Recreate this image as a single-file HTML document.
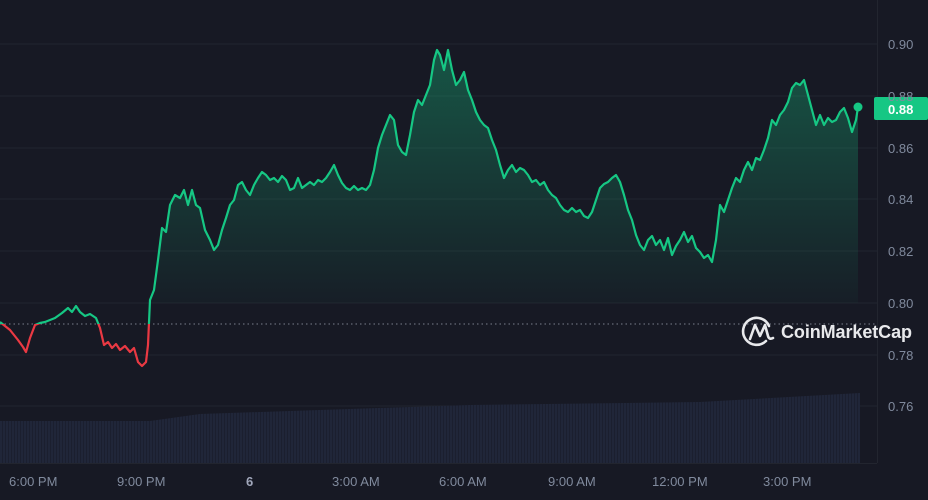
<!DOCTYPE html>
<html><head><style>
html,body{margin:0;padding:0;background:#171924;}
body{width:928px;height:495px;overflow:hidden;font-family:"Liberation Sans",sans-serif;}
</style></head><body>
<svg width="928" height="495" viewBox="0 0 928 495" xmlns="http://www.w3.org/2000/svg">
<defs>
<linearGradient id="g" x1="0" y1="0" x2="0" y2="1">
<stop offset="0" stop-color="#16c784" stop-opacity="0.35"/>
<stop offset="1" stop-color="#16c784" stop-opacity="0.03"/>
</linearGradient>
<clipPath id="up"><rect x="0" y="0" width="877" height="324"/></clipPath>
<clipPath id="fl"><rect x="0" y="0" width="877" height="303"/></clipPath>
<clipPath id="dn"><rect x="0" y="324" width="877" height="200"/></clipPath>
<pattern id="vb" width="3" height="10" patternUnits="userSpaceOnUse"><rect width="2" height="10" fill="#202639"/><rect x="2" width="1" height="10" fill="#1b1f2f"/></pattern>
</defs>
<rect width="928" height="495" fill="#171924"/>
<g stroke="#22252f" stroke-width="1">
<line x1="0" y1="44" x2="877" y2="44"/><line x1="0" y1="96" x2="877" y2="96"/><line x1="0" y1="148" x2="877" y2="148"/><line x1="0" y1="199" x2="877" y2="199"/><line x1="0" y1="251" x2="877" y2="251"/><line x1="0" y1="303" x2="877" y2="303"/><line x1="0" y1="355" x2="877" y2="355"/><line x1="0" y1="406" x2="877" y2="406"/>
<line x1="877.5" y1="0" x2="877.5" y2="463"/>
<line x1="0" y1="463.5" x2="877" y2="463.5"/>
</g>
<path d="M0 421 L150 421 L200 414 L470 405 L700 402 L860 393 L860 463 L0 463 Z" fill="url(#vb)"/>
<line x1="0" y1="324" x2="877" y2="324" stroke="#7a7f8c" stroke-width="1" stroke-dasharray="1.5 3"/>
<path clip-path="url(#fl)" fill="url(#g)" d="M150 303 L150 300 L154 290 L158 260 L162 228 L166 232 L170 205 L175 195 L180 198 L184 190 L188 205 L192 190 L196 205 L200 208 L205 230 L210 240 L214 250 L218 245 L222 230 L226 218 L230 205 L234 200 L238 185 L242 182 L246 190 L250 195 L254 185 L258 178 L262 172 L266 175 L270 180 L274 178 L278 182 L282 176 L286 180 L290 190 L294 188 L298 178 L302 188 L306 185 L310 182 L314 185 L318 180 L322 182 L326 178 L330 172 L334 165 L338 175 L342 183 L346 188 L350 190 L354 186 L358 190 L362 188 L366 190 L370 185 L374 170 L378 148 L382 135 L386 125 L390 115 L394 120 L398 145 L402 152 L406 155 L410 135 L414 112 L418 100 L422 105 L426 95 L430 85 L434 60 L437 50 L440 55 L444 70 L448 50 L452 70 L456 85 L460 80 L464 72 L468 90 L472 100 L476 112 L480 120 L484 125 L488 128 L492 140 L496 150 L500 165 L504 178 L508 170 L512 165 L516 172 L520 168 L524 170 L528 175 L532 182 L536 180 L540 185 L544 182 L548 190 L552 195 L556 198 L560 205 L564 210 L568 212 L572 208 L576 212 L580 210 L584 216 L588 218 L592 212 L596 200 L600 188 L604 184 L608 182 L612 178 L616 175 L620 182 L624 195 L628 210 L632 220 L636 235 L640 245 L644 250 L648 240 L652 236 L656 245 L660 240 L664 250 L668 238 L672 255 L676 246 L680 240 L684 232 L688 242 L692 236 L696 248 L700 252 L704 258 L708 255 L712 262 L716 240 L720 205 L724 212 L728 200 L732 188 L736 178 L740 182 L744 170 L748 162 L752 170 L756 158 L760 160 L764 150 L768 138 L772 120 L776 125 L780 115 L784 110 L788 102 L792 88 L796 83 L800 85 L804 80 L808 95 L812 110 L816 125 L820 115 L824 125 L828 118 L832 122 L836 120 L840 112 L844 108 L848 118 L852 132 L856 120 L858 107 L858 303 Z"/>
<g fill="none" stroke-width="2.2" stroke-linejoin="round">
<path clip-path="url(#up)" stroke="#16c784" d="M0 322 L10 330 L18 340 L23 347 L26 352 L30 338 L35 325 L40 323 L45 322 L50 320 L55 318 L62 313 L68 308 L72 312 L76 306 L80 312 L85 316 L90 314 L96 318 L100 328 L104 345 L108 342 L112 348 L116 344 L120 350 L125 346 L130 352 L134 348 L138 362 L142 366 L146 362 L148 345 L150 300 L154 290 L158 260 L162 228 L166 232 L170 205 L175 195 L180 198 L184 190 L188 205 L192 190 L196 205 L200 208 L205 230 L210 240 L214 250 L218 245 L222 230 L226 218 L230 205 L234 200 L238 185 L242 182 L246 190 L250 195 L254 185 L258 178 L262 172 L266 175 L270 180 L274 178 L278 182 L282 176 L286 180 L290 190 L294 188 L298 178 L302 188 L306 185 L310 182 L314 185 L318 180 L322 182 L326 178 L330 172 L334 165 L338 175 L342 183 L346 188 L350 190 L354 186 L358 190 L362 188 L366 190 L370 185 L374 170 L378 148 L382 135 L386 125 L390 115 L394 120 L398 145 L402 152 L406 155 L410 135 L414 112 L418 100 L422 105 L426 95 L430 85 L434 60 L437 50 L440 55 L444 70 L448 50 L452 70 L456 85 L460 80 L464 72 L468 90 L472 100 L476 112 L480 120 L484 125 L488 128 L492 140 L496 150 L500 165 L504 178 L508 170 L512 165 L516 172 L520 168 L524 170 L528 175 L532 182 L536 180 L540 185 L544 182 L548 190 L552 195 L556 198 L560 205 L564 210 L568 212 L572 208 L576 212 L580 210 L584 216 L588 218 L592 212 L596 200 L600 188 L604 184 L608 182 L612 178 L616 175 L620 182 L624 195 L628 210 L632 220 L636 235 L640 245 L644 250 L648 240 L652 236 L656 245 L660 240 L664 250 L668 238 L672 255 L676 246 L680 240 L684 232 L688 242 L692 236 L696 248 L700 252 L704 258 L708 255 L712 262 L716 240 L720 205 L724 212 L728 200 L732 188 L736 178 L740 182 L744 170 L748 162 L752 170 L756 158 L760 160 L764 150 L768 138 L772 120 L776 125 L780 115 L784 110 L788 102 L792 88 L796 83 L800 85 L804 80 L808 95 L812 110 L816 125 L820 115 L824 125 L828 118 L832 122 L836 120 L840 112 L844 108 L848 118 L852 132 L856 120 L858 107"/>
<path clip-path="url(#dn)" stroke="#ea3943" d="M0 322 L10 330 L18 340 L23 347 L26 352 L30 338 L35 325 L40 323 L45 322 L50 320 L55 318 L62 313 L68 308 L72 312 L76 306 L80 312 L85 316 L90 314 L96 318 L100 328 L104 345 L108 342 L112 348 L116 344 L120 350 L125 346 L130 352 L134 348 L138 362 L142 366 L146 362 L148 345 L150 300 L154 290"/>
</g>
<circle cx="858" cy="107" r="4.5" fill="#16c784"/>
<rect x="874" y="97" width="54" height="23" rx="2" fill="#16c784"/>
<g font-family="Liberation Sans, sans-serif" font-size="13" fill="#808a9d">
<text x="888" y="49">0.90</text><text x="888" y="101">0.88</text><text x="888" y="153">0.86</text><text x="888" y="204">0.84</text><text x="888" y="256">0.82</text><text x="888" y="308">0.80</text><text x="888" y="360">0.78</text><text x="888" y="411">0.76</text>
<text x="888" y="114" fill="#fff" font-weight="bold">0.88</text>
<text x="9" y="486">6:00 PM</text><text x="117" y="486">9:00 PM</text><text x="246" y="486" font-weight="bold" fill="#a1a7bb">6</text><text x="332" y="486">3:00 AM</text><text x="439" y="486">6:00 AM</text><text x="548" y="486">9:00 AM</text><text x="652" y="486">12:00 PM</text><text x="763" y="486">3:00 PM</text>
</g>
<g fill="none" stroke="#e8e9ec" stroke-width="2.6" stroke-linecap="round" stroke-linejoin="round">
<path d="M769 326 A13.5 13.5 0 1 0 766 341"/>
<path d="M750 339 L755 325 L760 336 L765 325 L768 336 Q769 340 773 338"/>
</g>
<text x="781" y="338" font-family="Liberation Sans, sans-serif" font-size="18" font-weight="bold" fill="#e8e9ec" textLength="131">CoinMarketCap</text>
</svg>
</body></html>
